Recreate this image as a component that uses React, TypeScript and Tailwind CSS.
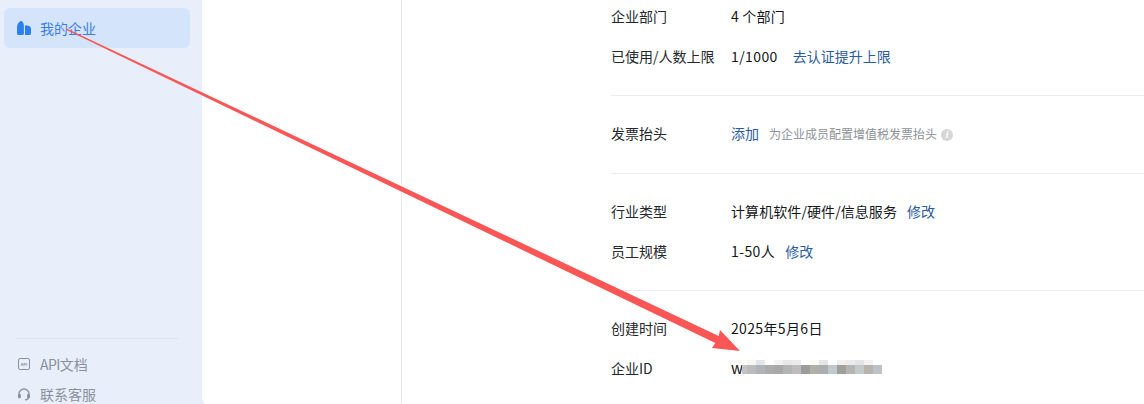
const topCells = [
  "bg-[#f8f6f3]", "bg-[#e3e5e8]", "bg-white", "bg-[#f4f2f2]", "bg-[#e6e7e8]", "bg-[#ecebeb]", "bg-white",
  "bg-[#fbfaf8]", "bg-[#e6e6e6]", "bg-white", "bg-[#f0f0f2]", "bg-[#ebebeb]", "bg-[#e4e4e4]", "bg-[#f2f2f6]", "bg-white",
];
const bottomCells = [
  "bg-[#bcbcbc]", "bg-[#aeb4b8]", "bg-[#acacac]", "bg-[#a9a8a9]", "bg-[#b3b5b2]", "bg-[#bebcbc]", "bg-[#9c9c9c]",
  "bg-[#b0afa8]", "bg-[#abadb1]", "bg-[#c3c8cc]", "bg-[#a0a09a]", "bg-[#b5b5b3]", "bg-[#c5c9cc]", "bg-[#b8b4ac]", "bg-[#bcc2c6]",
];

function Row({ label, children }: { label: string; children: React.ReactNode }) {
  return (
    <div className="flex h-10 items-center pb-[2px]">
      <div className="w-[120px] shrink-0 text-[#24272b]">{label}</div>
      <div className="flex items-center text-[#14171a]">{children}</div>
    </div>
  );
}

function Link({ children, className = "" }: { children: React.ReactNode; className?: string }) {
  return <span className={`text-[#2b5c9e] ${className}`}>{children}</span>;
}

export default function App() {
  return (
    <div className="relative flex h-[404px] w-[1144px] overflow-hidden bg-white font-['Noto_Sans_CJK_SC','Noto_Sans',sans-serif] text-sm">
      <aside className="flex h-full w-[202px] shrink-0 flex-col justify-between bg-[#e8effb]">
        <div className="px-1 pt-2">
          <div className="flex h-10 w-[186px] items-center gap-[9px] rounded-md bg-[#d3e4fb] pl-[13px] text-[#3d7de6]">
            <svg width="14" height="14" viewBox="0 0 14 14" fill="#2b7ff0">
              <path d="M0 12.6 C0 13.5 0.6 14 1.4 14 H5.5 C6.3 14 6.9 13.5 6.9 12.6 V5.5 C6.9 3 5.9 0.9 4.6 0.1 C4.2 -0.1 3.7 0 3.3 0.2 C1.4 1.4 0 3.5 0 6 Z" />
              <path d="M8 14 H12.4 C13.3 14 14 13.5 14 12.6 V7.5 C14 6.2 13 5.2 11.9 4.9 L9.2 4.3 C8.5 4.2 8 4.7 8 5.4 Z" />
            </svg>
            <span>我的企业</span>
          </div>
        </div>
        <div className="-mb-[6px] px-4 text-[#8a909b]">
          <div className="mr-2 mb-[11px] border-t border-[#dde3ef]" />
          <div className="flex h-[30px] items-center gap-2.5 pb-[2px] pl-0.5">
            <svg width="12" height="12" viewBox="0 0 12 12" fill="none">
              <rect x="0.5" y="0.5" width="11" height="11" rx="1.5" stroke="#8a909b" />
              <text x="6" y="7.5" textAnchor="middle" fontSize="4" fontWeight="700" fill="#8a909b">API</text>
            </svg>
            <span><span className="tracking-[-0.6px]">API</span>文档</span>
          </div>
          <div className="flex h-[30px] items-center gap-2.5 pb-[2px] pl-0.5">
            <svg width="12" height="13" viewBox="0 0 12 13" fill="none" stroke="#8a909b" strokeWidth="1.3">
              <path d="M1 8 V6 A5 5 0 0 1 11 6 V8" />
              <rect x="0.6" y="6.6" width="1.6" height="3" rx="0.6" fill="#8a909b" />
              <rect x="9.8" y="6.6" width="1.6" height="3" rx="0.6" fill="#8a909b" />
              <path d="M10.5 9.6 C10.2 11 9 11.8 7 11.8" />
            </svg>
            <span>联系客服</span>
          </div>
        </div>
      </aside>

      <div className="h-full w-[200px] shrink-0 border-r border-[#ececec]" />

      <main className="flex-1 pl-[209px]">
        <div className="-mt-[3px] border-b border-[#ececec] pb-[18px]">
          <Row label="企业部门"><span className="tracking-[0.2px]">4 个部门</span></Row>
          <Row label="已使用/人数上限">
            <span className="tracking-[0.4px]">1/1000</span>
            <Link className="ml-[15px]">去认证提升上限</Link>
          </Row>
        </div>
        <div className="mt-[18px] border-b border-[#ececec] pb-[19px]">
          <Row label="发票抬头">
            <Link>添加</Link>
            <span className="mt-[2px] ml-2.5 text-xs text-[#8c9097]">为企业成员配置增值税发票抬头</span>
            <span className="mt-[3px] ml-1 flex h-3 w-3 items-center justify-center rounded-full bg-[#d6d6d6] font-['Liberation_Serif',serif] text-[10px] leading-none font-bold text-white italic">i</span>
          </Row>
        </div>
        <div className="mt-[18px] border-b border-[#ececec] pb-[18px]">
          <Row label="行业类型">
            <span className="tracking-[0.08px]">计算机软件/硬件/信息服务</span>
            <Link className="ml-2.5">修改</Link>
          </Row>
          <Row label="员工规模">
            <span className="tracking-[0.4px]">1-50人</span>
            <Link className="ml-2.5">修改</Link>
          </Row>
        </div>
        <div className="mt-[18px]">
          <Row label="创建时间"><span className="tracking-[0.35px]">2025年5月6日</span></Row>
          <Row label="企业ID">
            <span className="w-[11px] text-[15px]">w</span>
            <div className="mb-[2px] flex flex-col">
              <div className="ml-[5px] flex h-[5px]">
                {topCells.map((c, i) => <div key={i} className={`h-full w-[9px] ${c}`} />)}
              </div>
              <div className="flex h-[9px]">
                <div className="h-full w-[5px] bg-[#c4c4c4]" />
                {bottomCells.map((c, i) => <div key={i} className={`h-full w-[9px] ${c}`} />)}
              </div>
            </div>
          </Row>
        </div>
      </main>

      <svg className="pointer-events-none absolute top-0 left-0" width="1144" height="404" viewBox="0 0 1144 404">
        <polygon fill="#e8effb" points="202,399 205,404 202,404" />
        <polygon fill="#fb5656" points="66,28.2 718.7,335.9 720,330 740,351 712,348 715.3,343.1 66,29.8" />
      </svg>
    </div>
  );
}
